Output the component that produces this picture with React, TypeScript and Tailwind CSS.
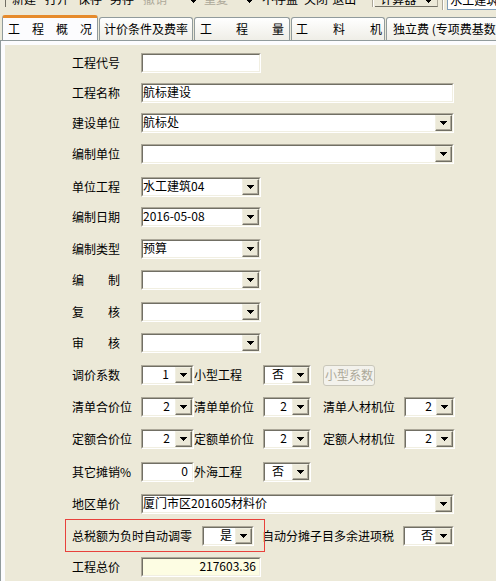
import React from "react";

const Arrow = () => (
  <svg width="7" height="4" viewBox="0 0 7 4" shapeRendering="crispEdges">
    <path d="M0 0h7v1h-1v1h-1v1h-1v1h-1v-1h-1v-1h-1v-1h-1z" fill="#000" />
  </svg>
);

const DropBtn = () => (
  <div className="h-full w-[17px] shrink-0 border border-t-[#f1efe2] border-l-[#f1efe2] border-r-[#716f64] border-b-[#716f64] bg-[#ece9d8]">
    <div className="h-full flex items-center justify-center border-r border-b border-r-[#aca899] border-b-[#aca899]">
      <Arrow />
    </div>
  </div>
);

type BoxProps = { w: string; text?: string; drop?: boolean; pr?: string; bg?: string };

// sunken classic edit / combo box
function Box({ w, text = "", drop = false, pr, bg = "bg-white" }: BoxProps) {
  return (
    <div className={`h-[20px] shrink-0 border border-t-[#aca899] border-l-[#aca899] border-r-white border-b-white ${w}`}>
      <div className={`h-full flex border border-t-[#716f64] border-l-[#716f64] border-r-[#f1efe2] border-b-[#f1efe2] ${bg}`}>
        <span className={`flex-1 overflow-hidden whitespace-nowrap leading-[13px] ${pr ? `text-right ${pr}` : ""}`}>{text}</span>
        {drop && <DropBtn />}
      </div>
    </div>
  );
}

const Label = ({ children, w = "w-[69px]" }: { children: React.ReactNode; w?: string }) => (
  <span className={`shrink-0 whitespace-nowrap ${w}`}>{children}</span>
);

const Spaced = ({ a, b }: { a: string; b: string }) => (
  <span className="w-[69px] shrink-0">
    <span className="flex justify-between w-[48px]">
      <span>{a}</span>
      <span>{b}</span>
    </span>
  </span>
);

const Tb = ({ children, ml, gray }: { children: React.ReactNode; ml: string; gray?: boolean }) => (
  <span className={`${ml} shrink-0 whitespace-nowrap ${gray ? "text-[#aca899]" : "text-black"}`}>{children}</span>
);

const TinyArrow = ({ ml }: { ml: string }) => (
  <svg className={`${ml} mt-[9px] shrink-0`} width="5" height="3" viewBox="0 0 5 3" shapeRendering="crispEdges">
    <path d="M0 0h5v1h-1v1h-1v1h-1v-1h-1v-1h-1z" fill="#000" />
  </svg>
);

export default function App() {
  return (
    <div className="w-[496px] h-[581px] overflow-hidden bg-[#ece9d8] text-[12px] text-black font-['Noto_Sans_CJK_SC',sans-serif]">
      {/* toolbar, only its lower edge is in view */}
      <div className="h-[15px] overflow-hidden">
        <div className="flex items-start -mt-[9px] leading-[16px] h-[24px]">
          <div className="ml-[5px] w-[1px] h-[16px] bg-[#716f64] shrink-0" />
          <Tb ml="ml-[6px]">新建</Tb>
          <Tb ml="ml-[9px]">打开</Tb>
          <Tb ml="ml-[9px]">保存</Tb>
          <Tb ml="ml-[8px]">另存</Tb>
          <Tb ml="ml-[9px]" gray>撤销</Tb>
          <TinyArrow ml="ml-[24px]" />
          <Tb ml="ml-[8px]" gray>重复</Tb>
          <TinyArrow ml="ml-[19px]" />
          <Tb ml="ml-[10px]">不存盘</Tb>
          <Tb ml="ml-[6px]">关闭</Tb>
          <Tb ml="ml-[4px]">退出</Tb>
          <div className="ml-[16px] w-[2px] h-[16px] border-l border-r border-l-[#aca899] border-r-white shrink-0" />
          <div className="ml-[1px] shrink-0 flex items-start h-[16px] pl-[5px] pr-[6px] border-b border-r border-b-[#716f64] border-r-[#aca899]">
            <span>计算器</span>
            <TinyArrow ml="ml-[10px]" />
          </div>
          <div className="ml-[4px] w-[2px] h-[19px] border-l border-r border-l-[#aca899] border-r-white shrink-0" />
          <div className="ml-[3px] flex-1 h-[19px] bg-white border border-[#7f9db9] border-r-0 pl-[2px] whitespace-nowrap overflow-hidden">
            水工建筑04
          </div>
        </div>
      </div>

      {/* tabs */}
      <div className="flex items-end h-[25px] pl-[2px]">
        <div className="shrink-0 h-[25px] w-[96px] flex items-center justify-between px-[5px] bg-[#fcfcfe] border border-b-0 border-[#919b9c] border-t-[3px] border-t-[#e68b2c] rounded-t-[3px]">
          <span>工</span><span>程</span><span>概</span><span>况</span>
        </div>
        <div className="shrink-0 ml-[1px] h-[23px] w-[94px] flex items-center pl-[4px] bg-linear-to-b from-white to-[#efeee7] border border-b-0 border-[#919b9c] rounded-t-[3px] whitespace-nowrap">
          计价条件及费率
        </div>
        <div className="shrink-0 ml-[1px] h-[23px] w-[96px] flex items-center justify-between px-[5px] bg-linear-to-b from-white to-[#efeee7] border border-b-0 border-[#919b9c] rounded-t-[3px]">
          <span>工</span><span>程</span><span>量</span>
        </div>
        <div className="shrink-0 ml-[1px] h-[23px] w-[94px] flex items-center justify-between pl-[4px] pr-[2px] bg-linear-to-b from-white to-[#efeee7] border border-b-0 border-[#919b9c] rounded-t-[3px]">
          <span>工</span><span>料</span><span>机</span>
        </div>
        <div className="shrink-0 ml-[1px] h-[23px] w-[130px] flex items-center pl-[6px] bg-linear-to-b from-white to-[#efeee7] border border-b-0 border-[#919b9c] rounded-t-[3px] whitespace-nowrap">
          独立费 (专项费基数
        </div>
      </div>

      {/* tab page */}
      <div className="h-[541px] border-t border-l border-[#919b9c] bg-[#fcfcfe] pl-[4px] pt-[4px]">
        <div className="h-full bg-[#ece9d8] pt-[8px]">
          <div className="flex items-center h-[20px] pl-[67px]">
            <Label>工程代号</Label>
            <Box w="w-[120px]" />
          </div>
          <div className="flex items-center h-[20px] pl-[67px] mt-[10px]">
            <Label>工程名称</Label>
            <Box w="w-[313px]" text="航标建设" />
          </div>
          <div className="flex items-center h-[20px] pl-[67px] mt-[10px]">
            <Label>建设单位</Label>
            <Box w="w-[313px]" text="航标处" drop />
          </div>
          <div className="flex items-center h-[20px] pl-[67px] mt-[11px]">
            <Label>编制单位</Label>
            <Box w="w-[313px]" drop />
          </div>
          <div className="flex items-center h-[20px] pl-[67px] mt-[13px]">
            <Label>单位工程</Label>
            <Box w="w-[120px]" text="水工建筑04" drop />
          </div>
          <div className="flex items-center h-[20px] pl-[67px] mt-[10px]">
            <Label>编制日期</Label>
            <Box w="w-[120px]" text="2016-05-08" drop />
          </div>
          <div className="flex items-center h-[20px] pl-[67px] mt-[12px]">
            <Label>编制类型</Label>
            <Box w="w-[120px]" text="预算" drop />
          </div>
          <div className="flex items-center h-[20px] pl-[67px] mt-[11px]">
            <Spaced a="编" b="制" />
            <Box w="w-[120px]" drop />
          </div>
          <div className="flex items-center h-[20px] pl-[67px] mt-[12px]">
            <Spaced a="复" b="核" />
            <Box w="w-[120px]" drop />
          </div>
          <div className="flex items-center h-[20px] pl-[67px] mt-[11px]">
            <Spaced a="审" b="核" />
            <Box w="w-[120px]" drop />
          </div>

          <div className="flex items-center h-[20px] pl-[67px] mt-[12px]">
            <Label>调价系数</Label>
            <Box w="w-[53px]" text="1" pr="pr-[6px]" drop />
            <Label>小型工程</Label>
            <Box w="w-[48px]" text="否" pr="pr-[8px]" drop />
            <div className="ml-[12px] w-[52px] h-[21px] flex items-center justify-center border border-[#c9c7ba] rounded-[3px] bg-[#f3f2ec] text-[#aca899]">
              小型系数
            </div>
          </div>
          <div className="flex items-center h-[20px] pl-[67px] mt-[12px]">
            <Label>清单合价位</Label>
            <Box w="w-[53px]" text="2" pr="pr-[5px]" drop />
            <Label>清单单价位</Label>
            <Box w="w-[48px]" text="2" pr="pr-[5px]" drop />
            <Label w="w-[81px] ml-[12px]">清单人材机位</Label>
            <Box w="w-[51px]" text="2" pr="pr-[4px]" drop />
          </div>
          <div className="flex items-center h-[20px] pl-[67px] mt-[12px]">
            <Label>定额合价位</Label>
            <Box w="w-[53px]" text="2" pr="pr-[5px]" drop />
            <Label>定额单价位</Label>
            <Box w="w-[48px]" text="2" pr="pr-[5px]" drop />
            <Label w="w-[81px] ml-[12px]">定额人材机位</Label>
            <Box w="w-[51px]" text="2" pr="pr-[4px]" drop />
          </div>
          <div className="flex items-center h-[20px] pl-[67px] mt-[13px]">
            <Label>其它摊销%</Label>
            <Box w="w-[53px]" text="0" pr="pr-[4px]" />
            <Label>外海工程</Label>
            <Box w="w-[48px]" text="否" pr="pr-[8px]" drop />
          </div>
          <div className="flex items-center h-[20px] pl-[67px] mt-[12px]">
            <Label>地区单价</Label>
            <Box w="w-[313px]" text="厦门市区201605材料价" drop />
          </div>
          <div className="relative flex items-center h-[20px] pl-[67px] mt-[12px]">
            <div className="absolute left-[60px] -top-[7px] w-[200px] h-[33px] border border-[#e8413c]" />
            <Label w="w-[130px]">总税额为负时自动调零</Label>
            <Box w="w-[52px]" text="是" pr="pr-[3px]" drop />
            <Label w="w-[141px] ml-[8px]">自动分摊子目多余进项税</Label>
            <Box w="w-[51px]" text="否" pr="pr-[2px]" drop />
          </div>
          <div className="flex items-center h-[20px] pl-[67px] mt-[11px]">
            <Label>工程总价</Label>
            <Box w="w-[120px]" text="217603.36" pr="pr-[3px]" bg="bg-[#fdfde3]" />
          </div>
        </div>
      </div>
    </div>
  );
}
